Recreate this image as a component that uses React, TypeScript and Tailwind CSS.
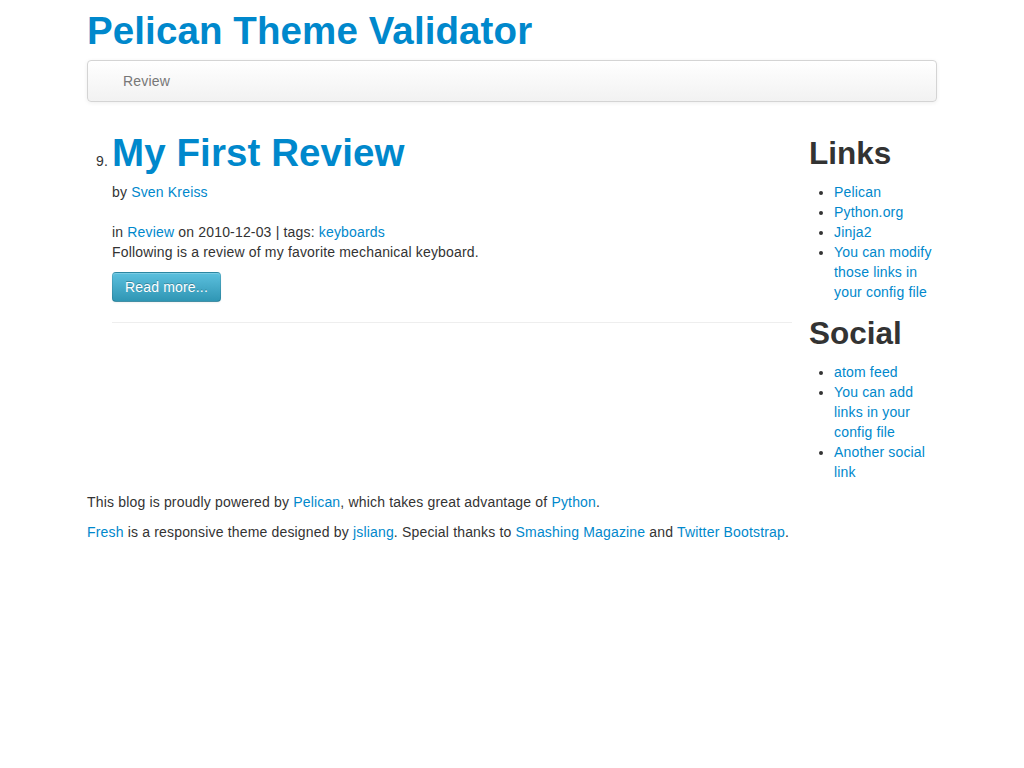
const linkCls = "text-[#0088cc] hover:text-[#005580] hover:underline"
const h2Cls = "text-[31.5px] leading-[42px] font-bold text-[#333] tracking-normal"

const Sidebar = () => (
  <aside className="w-[128px] shrink-0">
    <h2 className={"mt-[10px] mb-[8px] " + h2Cls}>Links</h2>
    <ul className="ml-[25px] mb-[10px] list-disc">
      <li><a href="#" className={linkCls}>Pelican</a></li>
      <li><a href="#" className={linkCls}>Python.org</a></li>
      <li><a href="#" className={linkCls}>Jinja2</a></li>
      <li><a href="#" className={linkCls}>You can modify those links in your config file</a></li>
    </ul>
    <h2 className={"mb-[8px] " + h2Cls}>Social</h2>
    <ul className="ml-[25px] mb-[10px] list-disc">
      <li><a href="#" className={linkCls}>atom feed</a></li>
      <li><a href="#" className={linkCls}>You can add links in your config file</a></li>
      <li><a href="#" className={linkCls}>Another social link</a></li>
    </ul>
  </aside>
)

export default function App() {
  return (
    <div className="min-h-screen bg-white text-[14px] leading-[20px] tracking-[0.17px] text-[#333] font-['Liberation_Sans',Arial,sans-serif]">
      <div className="mx-auto w-[850px]">
        <h1 className="mt-[10px] mb-[8px] text-[38.5px] leading-[42px] font-bold tracking-[0.1px]">
          <a href="#" className="text-[#0088cc]">Pelican Theme Validator</a>
        </h1>

        <nav className="mb-[20px] h-[42px] rounded-[4px] border border-[#d4d4d4] bg-linear-to-b from-white to-[#f2f2f2] px-[20px] shadow-[0_1px_4px_rgba(0,0,0,0.065)]">
          <ul className="flex">
            <li>
              <a href="#" className="block px-[15px] py-[10px] text-[#777] hover:text-[#333]">Review</a>
            </li>
          </ul>
        </nav>

        <div className="flex items-start gap-[17px]">
          <main className="w-[705px] shrink-0">
            <ol start={9} className="ml-[25px] mb-[10px] list-decimal">
              <li>
                <h1 className="mt-[10px] mb-[8px] text-[38.5px] leading-[42px] font-bold tracking-[0.1px]">
                  <a href="#" className="text-[#0088cc]">My First Review</a>
                </h1>
                <p>
                  by <a href="#" className={linkCls}>Sven Kreiss</a>
                </p>
                <p className="mt-[20px]">
                  in <a href="#" className={linkCls}>Review</a> on 2010-12-03 | tags:{" "}
                  <a href="#" className={linkCls}>keyboards</a>
                </p>
                <p className="mb-[10px]">Following is a review of my favorite mechanical keyboard.</p>
                <a
                  href="#"
                  className="inline-block rounded-[4px] border border-[rgba(0,0,0,0.1)] border-b-[rgba(0,0,0,0.25)] bg-linear-to-b from-[#5bc0de] to-[#2f96b4] px-[12px] py-[4px] text-white [text-shadow:0_-1px_0_rgba(0,0,0,0.25)] shadow-[inset_0_1px_0_rgba(255,255,255,0.2),0_1px_2px_rgba(0,0,0,0.05)]"
                >
                  Read more...
                </a>
                <hr className="my-[20px] border-0 border-t border-t-[#eee] border-b border-b-white" />
              </li>
            </ol>
          </main>
          <Sidebar />
        </div>

        <footer>
          <p className="mb-[10px]">
            This blog is proudly powered by <a href="#" className={linkCls}>Pelican</a>, which takes great advantage of{" "}
            <a href="#" className={linkCls}>Python</a>.
          </p>
          <p className="mb-[10px]">
            <a href="#" className={linkCls}>Fresh</a> is a responsive theme designed by{" "}
            <a href="#" className={linkCls}>jsliang</a>. Special thanks to{" "}
            <a href="#" className={linkCls}>Smashing Magazine</a> and{" "}
            <a href="#" className={linkCls}>Twitter Bootstrap</a>.
          </p>
        </footer>
      </div>
    </div>
  )
}
